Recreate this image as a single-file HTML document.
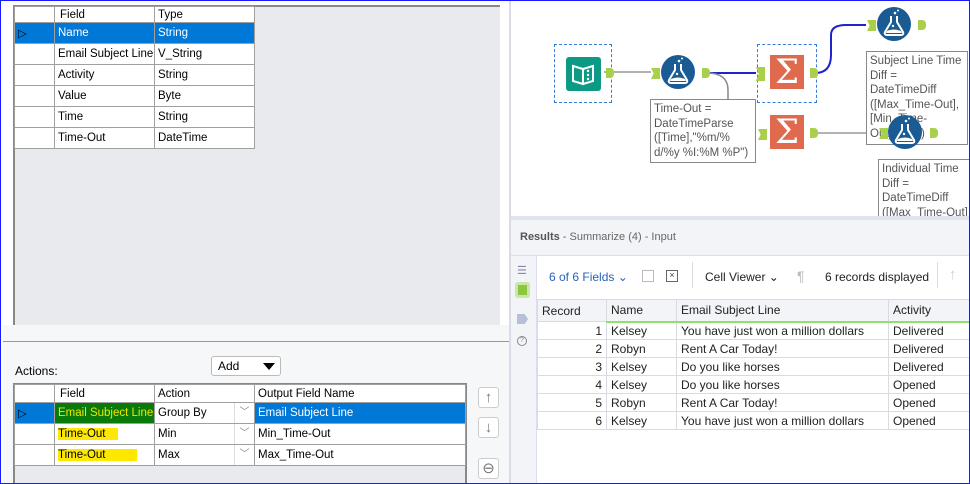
<!DOCTYPE html>
<html><head><style>
*{box-sizing:border-box;margin:0;padding:0}
body{width:970px;height:484px;overflow:hidden;background:#fff;font-family:"Liberation Sans",sans-serif;font-size:12px;color:#000;position:relative}
.abs{position:absolute}
table{border-collapse:collapse;position:absolute;font-size:11.5px}
td{border:1px solid #a0a0a0;padding:0 0 0 3px;white-space:nowrap;position:relative}
.sel td{background:#0078d7;color:#fff}
.g td{border-color:#d9dbe3;font-size:12px;color:#222;padding:0 4px}
.dd{position:absolute;right:0;top:0;width:20px;height:100%;border-left:1px solid #ddd;color:#888;text-align:center;font-size:10px;line-height:20px}
.box{position:absolute;border:1px solid #888;background:#fff;color:#555;font-size:12px;line-height:14.5px;padding:2px 3px}
.anc{position:absolute;width:8px;height:10px;background:#a8d04a;border-radius:0 4px 4px 0}
.anl{position:absolute;width:9px;height:11px;background:#a8d04a;clip-path:polygon(0 0,100% 0,100% 100%,0 100%,30% 50%)}
.flask{position:absolute;width:34px;height:34px}
.sum{position:absolute;width:34px;height:34px;background:#e06a4e;color:#fff;font-size:34px;line-height:34px;text-align:center;font-family:"DejaVu Serif",serif}
</style></head><body>
<svg width="0" height="0" style="position:absolute"><defs><symbol id="fl" viewBox="0 0 34 34"><circle cx="17" cy="17" r="17" fill="#1a5b94"/><path d="M14 9 V15 L8 25 Q7 28 10 28 H24 Q27 28 26 25 L20 15 V9" stroke="#fff" stroke-width="2" fill="none"/><path d="M10 24 Q17 21 24 24 L25 26 H9 Z" fill="#fff"/><circle cx="18" cy="6" r="1.3" fill="#fff"/><circle cx="21" cy="3.5" r="1" fill="#fff"/><circle cx="16" cy="19" r="1.2" fill="#fff"/></symbol></defs></svg>
<div class="abs" style="left:0;top:0;width:970px;height:484px;border:1px solid #1a1aff;z-index:50;pointer-events:none"></div>
<!-- left top -->
<div class="abs" style="left:13px;top:5px;width:487px;height:320px;background:#e9eaee;border-left:2px solid #888;border-top:2px solid #888"></div>
<table style="left:14px;top:6px;width:241px">
<tr style="height:16px;background:#fff"><td style="width:40px"></td><td style="width:100px;padding-left:5px">Field</td><td>Type</td></tr>
<tr class="sel" style="height:21px"><td style="color:#000">▷</td><td>Name</td><td>String</td></tr>
<tr style="height:21px;background:#fff"><td></td><td>Email Subject Line</td><td>V_String</td></tr>
<tr style="height:21px;background:#fff"><td></td><td>Activity</td><td>String</td></tr>
<tr style="height:21px;background:#fff"><td></td><td>Value</td><td>Byte</td></tr>
<tr style="height:21px;background:#fff"><td></td><td>Time</td><td>String</td></tr>
<tr style="height:21px;background:#fff"><td></td><td>Time-Out</td><td>DateTime</td></tr>
</table>
<div class="abs" style="left:3px;top:325px;width:507px;height:159px;background:#f6f7f9"></div>
<div class="abs" style="left:3px;top:341px;width:507px;height:1px;background:#999"></div>
<div class="abs" style="left:15px;top:364px;font-size:12px">Actions:</div>
<div class="abs" style="left:211px;top:356px;width:70px;height:20px;background:#fff;border:1px solid #bbb;border-radius:3px;padding:2px 6px;font-size:12px">Add<span style="position:absolute;right:5px;top:6px;border:6px solid transparent;border-top:7px solid #000;border-bottom:0"></span></div>
<div class="abs" style="left:13px;top:383px;width:454px;height:101px;background:#e9eaee;border:2px solid #888;border-bottom:none"></div>
<table style="left:14px;top:384px;width:452px">
<tr style="height:18px;background:#fff"><td style="width:40px"></td><td style="width:100px;padding-left:5px">Field</td><td style="width:100px">Action</td><td>Output Field Name</td></tr>
<tr style="height:21px"><td style="background:#0078d7">▷</td><td style="background:#0a7a0a;color:#e8e800">Email Subject Line</td><td style="background:#fff">Group By<span class="dd">﹀</span></td><td style="background:#0078d7;color:#fff">Email Subject Line</td></tr>
<tr style="height:21px;background:#fff"><td></td><td><span style="background:#ffe800">Time-Out&nbsp;&nbsp;&nbsp;&nbsp;</span></td><td>Min<span class="dd">﹀</span></td><td>Min_Time-Out</td></tr>
<tr style="height:21px;background:#fff"><td></td><td><span style="background:#ffe800">Time-Out&nbsp;&nbsp;&nbsp;&nbsp;&nbsp;&nbsp;&nbsp;&nbsp;&nbsp;&nbsp;</span></td><td>Max<span class="dd">﹀</span></td><td>Max_Time-Out</td></tr>
</table>
<div class="abs" style="left:478px;top:387px;width:21px;height:21px;border:1px solid #ccc;border-radius:3px;background:#fff;color:#777;text-align:center;font-size:15px;line-height:19px">↑</div>
<div class="abs" style="left:478px;top:417px;width:21px;height:21px;border:1px solid #ccc;border-radius:3px;background:#fff;color:#777;text-align:center;font-size:15px;line-height:19px">↓</div>
<div class="abs" style="left:478px;top:458px;width:21px;height:21px;border:1px solid #ccc;border-radius:3px;background:#fff;color:#777;text-align:center;font-size:15px;line-height:19px">⊖</div>
<!-- divider -->
<div class="abs" style="left:509px;top:0;width:2px;height:484px;background:#d9dce6"></div>
<!-- canvas -->
<div class="abs" style="left:511px;top:0;width:459px;height:216px;background:#fff;overflow:hidden">
<svg class="abs" style="left:0;top:0" width="459" height="216">
<path d="M93 72 H140" stroke="#999" stroke-width="1.5" fill="none"/>
<path d="M196 73 H245" stroke="#2222cc" stroke-width="2" fill="none"/>
<path d="M196 73 Q217 73 217 90 V128 Q217 135 230 135 H245" stroke="#888" stroke-width="1.5" fill="none"/>
<path d="M304 73 Q320 73 320 55 V35 Q320 25 335 25 H355" stroke="#2222cc" stroke-width="2" fill="none"/>
<path d="M304 133 H365" stroke="#999" stroke-width="1.5" fill="none"/>
</svg>
<div class="abs" style="left:43px;top:44px;width:58px;height:59px;border:1px dashed #3a7bd5"></div>
<div class="abs" style="left:55px;top:57px;width:35px;height:34px;background:#0d9a84;border-radius:3px"></div>
<svg class="abs" style="left:55px;top:57px" width="35" height="34"><path d="M7 9 L17 12 V27 L7 24 Z M17 12 L27 9 V24 L17 27" stroke="#fff" stroke-width="2" fill="none"/><circle cx="22" cy="14" r="1.2" fill="#fff"/><circle cx="22" cy="18" r="1.2" fill="#fff"/><circle cx="22" cy="22" r="1.2" fill="#fff"/></svg>
<div class="anc" style="left:95px;top:68px"></div>
<div class="anl" style="left:140px;top:68px"></div>
<svg class="flask" style="left:150px;top:55px"><use href="#fl"/></svg>
<div class="anc" style="left:191px;top:68px"></div>
<div class="abs" style="left:246px;top:44px;width:60px;height:59px;border:1px dashed #3a7bd5"></div>
<div class="anl" style="left:245px;top:67px;height:14px"></div>
<div class="sum" style="left:259px;top:55px">Σ</div>
<div class="anc" style="left:299px;top:68px"></div>
<div class="anl" style="left:247px;top:129px"></div>
<div class="sum" style="left:259px;top:115px">Σ</div>
<div class="anc" style="left:299px;top:128px"></div>
<div class="anl" style="left:356px;top:20px"></div>
<svg class="flask" style="left:366px;top:7px"><use href="#fl"/></svg>
<div class="anc" style="left:407px;top:20px"></div>
<div class="box" style="left:139px;top:99px;width:106px;height:64px;font-size:11.5px">Time-Out =<br>DateTimeParse<br>([Time],"%m/%<br>d/%y %I:%M %P")</div>
<div class="box" style="left:355px;top:51px;width:102px;height:94px;font-size:11.5px">Subject Line Time<br>Diff =<br>DateTimeDiff<br>([Max_Time-Out],<br>[Min_Time-<br>Out],"sec")</div>
<div class="anl" style="left:368px;top:128px"></div>
<svg class="flask" style="left:377px;top:115px"><use href="#fl"/></svg>
<div class="anc" style="left:419px;top:128px"></div>
<div class="box" style="left:367px;top:159px;width:100px;height:70px;font-size:11.5px">Individual Time<br>Diff =<br>DateTimeDiff<br>([Max_Time-Out],</div>
</div>
<div class="abs" style="left:511px;top:216px;width:459px;height:4px;background:#dfe3ee"></div>
<!-- results -->
<div class="abs" style="left:511px;top:220px;width:459px;height:36px;background:#f3f4f8;border-bottom:1px solid #dde;color:#666;padding:11px 9px;font-size:11px"><b style="color:#555">Results</b> - Summarize (4) - Input</div>
<div class="abs" style="left:511px;top:256px;width:26px;height:228px;background:#f3f4f8;border-right:1px solid #dde"></div>
<div class="abs" style="left:517px;top:264px;color:#88a;font-size:11px">☰</div>
<div class="abs" style="left:515px;top:282px;width:15px;height:16px;background:#c9e7a8;border-radius:3px"><div style="margin:3px;width:9px;height:10px;background:#8dc63f"></div></div>
<div class="abs" style="left:517px;top:314px;width:11px;height:10px;background:#b8c0d8;clip-path:polygon(0 0,70% 0,100% 50%,70% 100%,0 100%)"></div>
<div class="abs" style="left:517px;top:336px;width:10px;height:10px;border:1px solid #889;border-radius:50%;font-size:7px;text-align:center;line-height:8px;color:#889">?</div>
<div class="abs" style="left:549px;top:270px;color:#2a62b8;font-size:12px">6 of 6 Fields ⌄</div>
<div class="abs" style="left:642px;top:270px;width:12px;height:12px;border:1px solid #bbb"></div>
<div class="abs" style="left:666px;top:270px;width:12px;height:12px;border:1.5px solid #666;font-size:9px;line-height:9px;text-align:center;color:#444">×</div>
<div class="abs" style="left:692px;top:262px;width:1px;height:26px;background:#ddd"></div>
<div class="abs" style="left:705px;top:270px;font-size:12px;color:#222">Cell Viewer ⌄</div>
<div class="abs" style="left:797px;top:268px;font-size:14px;color:#bbb">¶</div>
<div class="abs" style="left:825px;top:270px;font-size:12px;color:#222">6 records displayed</div>
<div class="abs" style="left:937px;top:262px;width:1px;height:26px;background:#ddd"></div>
<div class="abs" style="left:949px;top:266px;font-size:15px;color:#ccc">↑</div>
<table class="g" style="left:537px;top:299px;width:440px">
<tr style="height:22px;background:#f3f4f8"><td style="width:69px">Record</td><td style="width:70px;border-bottom:2px solid #90e070">Name</td><td style="width:212px;border-bottom:2px solid #90e070">Email Subject Line</td><td style="border-bottom:2px solid #90e070">Activity</td></tr>
<tr style="height:18px"><td style="text-align:right">1</td><td>Kelsey</td><td>You have just won a million dollars</td><td>Delivered</td></tr>
<tr style="height:18px"><td style="text-align:right">2</td><td>Robyn</td><td>Rent A Car Today!</td><td>Delivered</td></tr>
<tr style="height:18px"><td style="text-align:right">3</td><td>Kelsey</td><td>Do you like horses</td><td>Delivered</td></tr>
<tr style="height:18px"><td style="text-align:right">4</td><td>Kelsey</td><td>Do you like horses</td><td>Opened</td></tr>
<tr style="height:18px"><td style="text-align:right">5</td><td>Robyn</td><td>Rent A Car Today!</td><td>Opened</td></tr>
<tr style="height:18px"><td style="text-align:right">6</td><td>Kelsey</td><td>You have just won a million dollars</td><td>Opened</td></tr>
</table>
</body></html>
